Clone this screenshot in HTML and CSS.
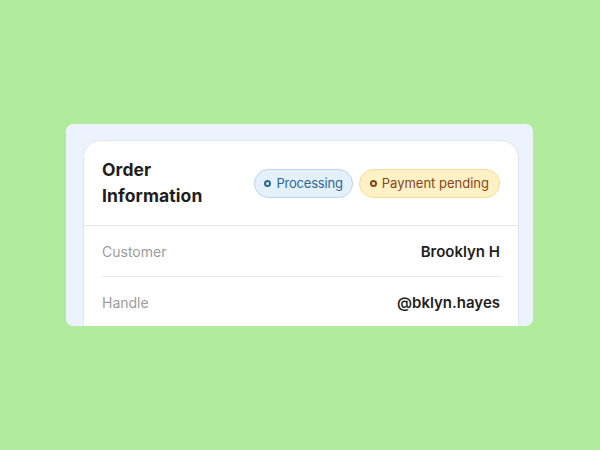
FILE: index.html
```html
<!DOCTYPE html>
<html>
<head>
<meta charset="utf-8">
<link rel="stylesheet" href="styles.css">
</head>
<body>
<div class="stage">
  <div class="frame">
    <div class="card">
      <div class="card-header">
        <h2 class="title">Order<br>Information</h2>
        <div class="badges">
          <span class="badge badge-blue"><span class="dot"></span>Processing</span>
          <span class="badge badge-yellow"><span class="dot"></span>Payment pending</span>
        </div>
      </div>
      <div class="rows">
        <div class="row">
          <span class="label">Customer</span>
          <span class="value">Brooklyn H</span>
        </div>
        <div class="row">
          <span class="label">Handle</span>
          <span class="value">@bklyn.hayes</span>
        </div>
      </div>
    </div>
  </div>
</div>
</body>
</html>
```

FILE: styles.css
```css
* { box-sizing: border-box; }
html, body {
  margin: 0;
  padding: 0;
  width: 600px;
  height: 450px;
  background: #b2eb9c;
  font-family: "Inter", "DejaVu Sans", sans-serif;
}
.stage {
  width: 600px;
  height: 450px;
  display: flex;
  align-items: flex-start;
  justify-content: flex-start;
  padding: 124px 0 0 66px;
}
.frame {
  width: 467px;
  height: 202px;
  background: #edf3fd;
  border-radius: 7px;
  padding: 16px 14px 0 17px;
  overflow: hidden;
}
.card {
  background: #ffffff;
  border: 1px solid #dfe5ee;
  border-radius: 18px;
  padding-bottom: 20px;
}
.card-header {
  display: flex;
  align-items: center;
  justify-content: space-between;
  padding: 16px 18px;
  border-bottom: 1px solid #e4e6ea;
}
.title {
  margin: 0;
  font-size: 17.5px;
  line-height: 26px;
  font-weight: 700;
  color: #1e1e1e;
  letter-spacing: 0.1px;
}
.badges {
  display: flex;
  gap: 6px;
}
.badge {
  display: inline-flex;
  align-items: center;
  gap: 5px;
  height: 29px;
  padding: 0 10px;
  border-radius: 15px;
  font-size: 13px;
  border: 1px solid;
}
.dot {
  width: 7px;
  height: 7px;
  border-radius: 50%;
  border: 2px solid currentColor;
}
.badge-blue {
  padding: 0 9px 0 9px;
  letter-spacing: -0.2px;
  background: #e4f0fb;
  border-color: #b8d4ee;
  color: #2c6797;
}
.badge-yellow {
  background: #fdf1c5;
  border-color: #f3dd98;
  color: #87451a;
}
.rows {
  padding: 0 18px;
}
.row {
  display: flex;
  justify-content: space-between;
  align-items: center;
  height: 51px;
  border-bottom: 1px solid #e8e9ec;
}
.label {
  font-size: 14px;
  color: #9c9c9c;
}
.value {
  font-size: 15px;
  font-weight: 600;
  color: #1f1f1f;
}
```
